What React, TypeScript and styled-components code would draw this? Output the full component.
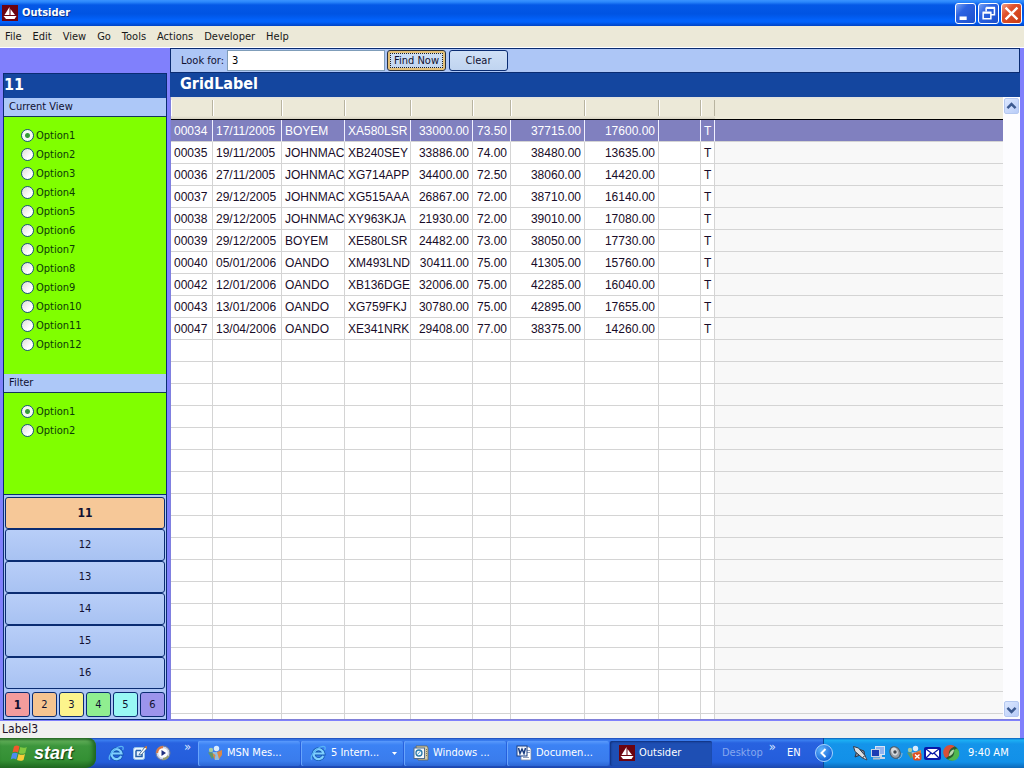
import React, { useState } from "react";
import styled, { createGlobalStyle, css } from "styled-components";

const ui = `"DejaVu Sans Condensed", "Noto Sans", sans-serif`;
const navy = "#0a2c72";
const sky = "#adc6f6";

const Global = createGlobalStyle`
  * { box-sizing: border-box; }
  body { margin: 0; font: 11px/14px ${ui}; color: #101030; }
  button, input { font: inherit; color: inherit; }
`;

const Desktop = styled.div`
  display: flex;
  flex-direction: column;
  height: 100vh;
  overflow: hidden;
  background: #8080fc;
`;

/* ---------- title bar and menu ---------- */
const TitleBar = styled.header`
  display: flex;
  align-items: center;
  gap: 4px;
  height: 26px;
  flex: none;
  padding: 0 2px;
  background: linear-gradient(#3a93ff 0, #2a86fb 2px, #0458e6 5px, #0054e3 14px, #0262fb 20px, #0262fb 22px, #0043c4 26px);
`;
const Title = styled.h1`
  flex: 1;
  margin: 0;
  font-size: 11px;
  line-height: 14px;
  color: #fff;
  text-shadow: 1px 1px #0a318c;
`;
const Caption = styled.button<{ $close?: boolean }>`
  width: 21px;
  height: 21px;
  padding: 0;
  border: 1px solid #fff;
  border-radius: 3px;
  background: ${(p) =>
    p.$close
      ? "linear-gradient(135deg, #f0a088 0, #e0522c 35%, #c83c14 100%)"
      : "linear-gradient(135deg, #7ba4f4 0, #2c63e2 35%, #1c50cc 100%)"};
  svg { display: block; }
`;
const Captions = styled.div`
  display: flex;
  gap: 2px;
`;
const MenuBar = styled.nav`
  display: flex;
  align-items: center;
  gap: 11px;
  height: 22px;
  flex: none;
  padding: 0 5px;
  background: #ece9d8;
  border-bottom: 1px solid #fff;
`;
const MenuLink = styled.a`
  color: #181818;
  text-decoration: none;
`;

/* ---------- main split ---------- */
const Main = styled.main`
  display: flex;
  flex: 1;
  min-height: 0;
  gap: 3px;
  padding: 0 4px 1px 3px;
`;
const Side = styled.aside`
  display: flex;
  flex-direction: column;
  width: 164px;
  flex: none;
  margin-top: 25px;
  border: 1px solid ${navy};
  background: ${sky};
`;
const SideTitle = styled.h2`
  margin: 0;
  height: 24px;
  flex: none;
  background: #14469f;
  color: #fff;
  font-size: 16px;
  line-height: 22px;
`;
const Section = styled.fieldset<{ $grow?: boolean }>`
  display: flex;
  flex-direction: column;
  min-height: 0;
  min-width: 0;
  margin: 0;
  padding: 0;
  border: 0;
  ${(p) => (p.$grow ? css`flex: 1;` : css`flex: none; height: 120px;`)}
`;
const SectionHead = styled.div`
  height: 19px;
  flex: none;
  padding: 2px 5px;
  border-bottom: 1px solid #14365c;
  background: #adc8f8;
`;
const Options = styled.div`
  flex: 1;
  min-height: 0;
  overflow: hidden;
  padding: 9px 17px;
  background: #80ff00;
`;
const Option = styled.label`
  display: flex;
  align-items: center;
  gap: 2px;
  height: 19px;
  color: #0c3a08;
`;
const Radio = styled.input`
  appearance: none;
  width: 13px;
  height: 13px;
  margin: 0;
  border: 1px solid #1c5180;
  border-radius: 50%;
  background: linear-gradient(135deg, #dcdcd7, #fff 70%);
  &:checked {
    background: radial-gradient(circle, #3c8848 0, #35a535 2px, #f6f8f4 3px);
  }
`;
const NavStack = styled.div`
  display: flex;
  flex-direction: column;
  flex: none;
  padding: 2px 1px;
  border-top: 1px solid ${navy};
`;
const NavButton = styled.button<{ $active?: boolean }>`
  height: 32px;
  padding: 0;
  border: 1px solid ${navy};
  border-radius: 3px;
  background: ${(p) => (p.$active ? "#f6c898" : "linear-gradient(#b8cef8, #a8c2f2)")};
  font-weight: ${(p) => (p.$active ? 700 : 400)};
  font-size: ${(p) => (p.$active ? 12 : 11)}px;
`;
const Swatches = styled.div`
  display: flex;
  gap: 2px;
  padding-top: 3px;
`;
const Swatch = styled.button<{ $tint: string; $active?: boolean }>`
  flex: 1;
  height: 25px;
  padding: 0;
  border: 1px solid ${navy};
  border-radius: 3px;
  background: ${(p) => p.$tint};
  font-weight: ${(p) => (p.$active ? 700 : 400)};
  font-size: ${(p) => (p.$active ? 12 : 11)}px;
`;

/* ---------- content ---------- */
const Content = styled.section`
  display: flex;
  flex-direction: column;
  flex: 1;
  min-width: 0;
`;
const SearchBar = styled.form`
  display: flex;
  align-items: center;
  height: 25px;
  flex: none;
  padding: 0 10px;
  border: 1px solid ${navy};
  background: ${sky};
`;
const SearchInput = styled.input`
  width: 158px;
  height: 21px;
  margin: 0 2px 0 3px;
  padding: 0 4px;
  border: 1px solid #7f9db9;
  background: #fff;
  color: #000;
  outline: none;
`;
const PushButton = styled.button<{ $focused?: boolean }>`
  width: 59px;
  height: 21px;
  margin-right: 3px;
  padding: 0;
  border: 1px solid ${navy};
  border-radius: 3px;
  background: linear-gradient(#cfe0f6, #c0d4f0);
  ${(p) =>
    p.$focused &&
    css`
      border-color: #28303c;
      box-shadow: inset 0 0 0 2px #e4c078;
      outline: 1px dotted #222;
      outline-offset: -4px;
    `}
`;
const GridTitle = styled.h2`
  margin: 0;
  height: 24px;
  flex: none;
  padding: 0 10px;
  background: #14469f;
  color: #fff;
  font-size: 16px;
  line-height: 21px;
`;
const GridArea = styled.div`
  display: flex;
  flex: 1;
  min-height: 0;
  border-left: 1px solid #8080e0;
  border-bottom: 1px solid #8080d8;
  background: #fff;
`;
const GridScroll = styled.div`
  flex: 1;
  min-width: 0;
  overflow: hidden;
`;
const Grid = styled.table`
  width: 100%;
  table-layout: fixed;
  border-collapse: separate;
  border-spacing: 0;
  font: 12px/19px "Liberation Sans", Arial, sans-serif;
  color: #180c28;
`;
const HeadCell = styled.th`
  height: 23px;
  padding: 0;
  border-bottom: 1px solid #000;
  background: linear-gradient(90deg, #fff, #fff) left 3px / 1px 16px no-repeat,
    linear-gradient(90deg, #b8b4a0, #b8b4a0) right 3px / 1px 16px no-repeat,
    linear-gradient(#e2e2e0 0, #ece9d8 3px, #ece9d8 19px, #d6d2c2 22px);
  &:last-child {
    background: linear-gradient(#e2e2e0 0, #ece9d8 3px);
  }
`;
const Cell = styled.td<{ $right?: boolean }>`
  height: 22px;
  padding: 2px 3px 0;
  border-right: 1px solid #d4d4d4;
  border-bottom: 1px solid #d4d4d4;
  overflow: hidden;
  white-space: nowrap;
  text-align: ${(p) => (p.$right ? "right" : "left")};
  &:last-child {
    border-right: 0;
    background: #f8f8f8;
  }
`;
const Row = styled.tr<{ $selected?: boolean }>`
  ${(p) =>
    p.$selected &&
    css`
      color: #fff;
      ${Cell}, ${Cell}:last-child {
        background: #8080bf;
        border-right-color: #f0f0ff;
      }
    `}
`;
const ScrollTrack = styled.div`
  display: flex;
  flex-direction: column;
  justify-content: space-between;
  width: 17px;
  flex: none;
  padding: 1px 1px 2px;
  background: #fdfdff;
`;
const ScrollButton = styled.button`
  width: 15px;
  height: 16px;
  padding: 0;
  border: 1px solid #b4c8f0;
  border-radius: 2px;
  background: linear-gradient(135deg, #dce8ff, #b8ccf8);
  svg { display: block; }
`;

const Status = styled.footer`
  height: 17px;
  flex: none;
  margin: 0 4px 0 0;
  padding: 1px 2px;
  background: #f0f0f0;
  color: #201028;
  font-size: 12px;
`;

/* ---------- taskbar ---------- */
const Taskbar = styled.footer`
  display: flex;
  align-items: center;
  height: 30px;
  flex: none;
  color: #fff;
  background: linear-gradient(#1c48b4 0, #3c80f0 2px, #2862e0 5px, #245ddb 24px, #1c46ac 30px);
`;
const Start = styled.button`
  display: flex;
  align-items: center;
  gap: 5px;
  width: 96px;
  height: 30px;
  padding: 0 10px;
  border: 0;
  border-radius: 0 8px 10px 0;
  background: linear-gradient(#2c6c2c 0, #5eac56 3px, #3c963c 8px, #349034 22px, #226c22 30px);
  box-shadow: inset -3px 0 4px #1e6420;
  color: #fff;
  font: italic 700 18px/20px "Liberation Sans", Arial, sans-serif;
  text-shadow: 1px 1px 1px #123c12;
`;
const QuickLaunch = styled.div`
  display: flex;
  align-items: center;
  gap: 7px;
  width: 102px;
  height: 30px;
  padding-left: 12px;
  svg { flex: none; }
`;
const Chevron = styled.span`
  align-self: flex-start;
  margin-left: 6px;
  padding-top: 2px;
  font-size: 13px;
  line-height: 14px;
  color: #d8e6ff;
`;
const Tasks = styled.div`
  display: flex;
  flex: 1;
  min-width: 0;
  gap: 1px;
`;
const Task = styled.button<{ $active?: boolean }>`
  display: flex;
  align-items: center;
  gap: 4px;
  width: 102px;
  height: 25px;
  padding: 0 6px 0 9px;
  border: 0;
  border-radius: 2px;
  white-space: nowrap;
  background: ${(p) =>
    p.$active ? "#1e4fb4" : "linear-gradient(#5a9afc 0, #3c82f4 4px, #3a7cec 20px, #2c66d4 25px)"};
  box-shadow: ${(p) => (p.$active ? "inset 1px 1px 2px #10307c" : "inset 1px 0 #68a4fc")};
  svg { flex: none; }
`;
const TaskText = styled.span`
  flex: 1;
  text-align: left;
`;
const Language = styled.div`
  display: flex;
  align-items: center;
  width: 110px;
  height: 30px;
  padding: 0 0 0 9px;
`;
const Faded = styled.span`
  color: #86a8ee;
`;
const LangCode = styled.span`
  margin-left: 11px;
`;
const Tray = styled.div`
  display: flex;
  align-items: center;
  gap: 2px;
  width: 201px;
  height: 30px;
  background: linear-gradient(#0c5cb8 0, #1cb0f4 2px, #1494ea 6px, #1290e8 24px, #0c68b8 30px);
  border-left: 1px solid #0c4898;
  svg { flex: none; }
`;
const TrayToggle = styled.button`
  width: 18px;
  height: 18px;
  margin: 0 17px 0 -9px;
  padding: 0;
  border: 1px solid #a8d4ff;
  border-radius: 50%;
  background: radial-gradient(circle at 35% 30%, #60b4fc, #1464d8 75%);
  svg { display: block; }
`;
const Clock = styled.time`
  margin-left: 6px;
  white-space: nowrap;
`;

/* ---------- icons ---------- */
const Boat = () => (
  <svg width="16" height="16" viewBox="0 0 16 16" aria-hidden="true">
    <rect width="16" height="16" fill="#6c0410" />
    <path d="M7.500 2v8H2.500zM8.500 4l4.500 6H8.500zM1.500 11h13l-2 3H4z" fill="#fff" />
  </svg>
);
const Explorer = () => (
  <svg width="17" height="16" viewBox="0 0 17 16" aria-hidden="true">
    <path d="M13.200 11A5 5 0 1 1 13.500 8.500H4.500" fill="none" stroke="#1458b0" strokeWidth="3.800" />
    <path d="M13.200 11A5 5 0 1 1 13.500 8.500H4.500" fill="none" stroke="#80d0ff" strokeWidth="2.200" />
    <path d="M2 14.800C-.5 13 4 4.500 10.500 2c4-1.500 5.500 0 4.200 3" fill="none" stroke="#58b4f4" strokeWidth="1.300" />
  </svg>
);
const ShowDesktop = () => (
  <svg width="16" height="16" viewBox="0 0 16 16" aria-hidden="true">
    <rect x="1.500" y="2.500" width="11" height="12" rx="2" fill="#e8f4ff" stroke="#98c4e8" />
    <path d="M4 5.500h5M4 5.500v6h6V9" fill="none" stroke="#2460a8" strokeWidth="1.500" />
    <path d="M7 9.500 13 2l2 1.500L9 10z" fill="#fff" stroke="#285888" strokeWidth=".8" />
    <path d="m12 2 3-1v3z" fill="#d07838" />
  </svg>
);
const MediaPlayer = () => (
  <svg width="16" height="16" viewBox="0 0 16 16" aria-hidden="true">
    <circle cx="8" cy="8" r="7" fill="#c8d4ec" stroke="#707890" />
    <path d="M8 1a7 7 0 0 0-7 7h3a4 4 0 0 1 4-4z" fill="#d87848" />
    <path d="M8 15a7 7 0 0 0 6-4l-3-1a4 4 0 0 1-3 2z" fill="#98a070" />
    <circle cx="8" cy="8" r="4.800" fill="#fff" />
    <path d="m6.500 5 4.500 3-4.500 3z" fill="#203080" />
  </svg>
);
const WindowsFlag = () => (
  <svg width="19" height="18" viewBox="0 0 19 18" aria-hidden="true">
    <path d="M4 2.500c2-1.500 4-1 5.500 0L8 8.500c-2-1-3.500-1.300-5.500 0z" fill="#f0582c" />
    <path d="M10.300 3c2 1 4 1.200 6.500 0l-1.500 6c-2 1.300-4.500 1-6.500 0z" fill="#80c840" />
    <path d="M2.200 9.500c2-1.300 3.800-1 5.500 0l-1.500 6c-2-1.200-3.700-1.200-5.500 0z" fill="#4c8cf0" />
    <path d="M8.500 10c2 1 4.300 1.300 6.500 0l-1.500 6c-2.300 1.200-4.500 1-6.500 0z" fill="#f8cc38" />
  </svg>
);
const Messenger = ({ offline }: { offline?: boolean }) => (
  <svg width="16" height="16" viewBox="0 0 16 16" aria-hidden="true">
    <circle cx="4" cy="5" r="2.200" fill="#a8cca0" />
    <path d="M1 7.500h6v4L5 14z" fill="#609868" />
    <circle cx="9.500" cy="3.500" r="2.700" fill="#d8ecff" />
    <path d="M5.500 7h8l-1.500 8H8z" fill="#90bce0" />
    <path d="m10 7 5-2v5l-3 4zM5.500 8l3 2-1 5z" fill="#d88848" />
    {offline && (
      <>
        <rect x="7" y="7.500" width="8.500" height="8" rx="2" fill="#e04c20" />
        <path d="m9 9.500 4.500 4m0-4-4.500 4" stroke="#fff" strokeWidth="1.400" />
      </>
    )}
  </svg>
);
const WindowsDoc = () => (
  <svg width="16" height="16" viewBox="0 0 16 16" aria-hidden="true">
    <path d="M3 1h11l1 2v12H5z" fill="#d4cca8" stroke="#686450" strokeWidth=".8" />
    <rect x="1" y="3" width="10.500" height="10.500" fill="#f4f8fc" stroke="#506c8c" />
    <circle cx="6" cy="8" r="3" fill="none" stroke="#2878a8" strokeWidth="1.300" />
    <path d="m4.500 9.500 3.500-4" stroke="#48a0d0" />
    <path d="M13.500 4v8" stroke="#807858" strokeDasharray="1 1" />
  </svg>
);
const WordDoc = () => (
  <svg width="16" height="16" viewBox="0 0 16 16" aria-hidden="true">
    <path d="M5 2h8l2 2v11H5z" fill="#fff" stroke="#7888a8" strokeWidth=".8" />
    <path d="M11 5.500h3M11 7.500h3M7 12.500h6" stroke="#90a0c0" />
    <rect x="1" y="1" width="10" height="10" fill="#f4f8ff" stroke="#183c80" />
    <path d="m2.500 3 1.500 5.500L6 4l2 4.500L9.500 3" fill="none" stroke="#183c80" strokeWidth="1.500" />
  </svg>
);
const Rocket = () => (
  <svg width="16" height="16" viewBox="0 0 16 16" aria-hidden="true">
    <path d="m4.500 7-1.500 5 4-1.500M8 4.500l4 1.500 .5 4" fill="#8890a0" stroke="#303848" />
    <path d="M1.500 1.500 6.500 3 13 10.500 10.500 13 3 6.500z" fill="#dce0e4" stroke="#303848" />
    <path d="m10.500 13 2.500-2.500 2 4.500z" fill="#e8e8e8" stroke="#404858" />
  </svg>
);
const Network = () => (
  <svg width="16" height="16" viewBox="0 0 16 16" aria-hidden="true">
    <rect x="5.500" y="1.500" width="9" height="8" fill="#90b4f0" stroke="#d8e4f4" />
    <path d="M11 10v3h4" stroke="#c8d4e4" strokeWidth="2" fill="none" />
    <rect x="1.500" y="4.500" width="8" height="7" fill="#1c3cb4" stroke="#c8d4e4" />
    <path d="M3 13.500h7" stroke="#b0bccc" strokeWidth="2" />
  </svg>
);
const Speaker = () => (
  <svg width="16" height="16" viewBox="0 0 16 16" aria-hidden="true">
    <ellipse cx="7" cy="7.500" rx="5" ry="6" fill="#98a0a8" stroke="#505860" transform="rotate(-25 7 7.500)" />
    <ellipse cx="6.500" cy="6.500" rx="3" ry="4" fill="#d8dce0" transform="rotate(-25 6.500 6.500)" />
    <circle cx="7" cy="7" r="1.700" fill="#404850" />
    <path d="M14 8c0 3-1 5-4 6" fill="none" stroke="#90b8d8" />
  </svg>
);
const Mail = () => (
  <svg width="17" height="16" viewBox="0 0 17 16" aria-hidden="true">
    <rect x="0" y="2" width="17" height="13" rx="2" fill="#0818a8" />
    <rect x="2" y="4" width="13" height="9" fill="#fff" />
    <path d="m2 4 6.500 5L15 4M2 13l5-5M15 13l-5-5" fill="none" stroke="#0818a8" strokeWidth="1.300" />
  </svg>
);
const Swirl = () => (
  <svg width="17" height="16" viewBox="0 0 17 16" aria-hidden="true">
    <circle cx="8.500" cy="8" r="7.500" fill="#285c30" />
    <path d="M3 13A7 7 0 0 1 12 1.500C7 3 5 7 6 11z" fill="#d85038" />
    <path d="M14 3.500a7 7 0 0 1-9.500 10.500C10 13 12 9 11 5z" fill="#50b850" />
    <path d="M6 11c0-3 2-6 5-6.500 0 3-2 6-5 6.500z" fill="#b8d8b0" />
  </svg>
);
const Glyph = ({ size, d, color = "#fff", width = 2 }: { size: number; d: string; color?: string; width?: number }) => (
  <svg width={size} height={size} viewBox="0 0 16 16" aria-hidden="true">
    <path d={d} fill="none" stroke={color} strokeWidth={width} />
  </svg>
);

/* ---------- data ---------- */
const menus = ["File", "Edit", "View", "Go", "Tools", "Actions", "Developer", "Help"];
const views = Array.from({ length: 12 }, (_, i) => `Option${i + 1}`);
const filters = ["Option1", "Option2"];
const navs = ["11", "12", "13", "14", "15", "16"];
const tints = ["#f49c9c", "#f6c490", "#fcf48c", "#90ee90", "#98f8f4", "#9c94ec"];
const widths = [42, 69, 63, 66, 62, 38, 74, 74, 42, 14];
const rows = [
  ["00034", "17/11/2005", "BOYEM", "XA580LSR", "33000.00", "73.50", "37715.00", "17600.00"],
  ["00035", "19/11/2005", "JOHNMAC", "XB240SEY", "33886.00", "74.00", "38480.00", "13635.00"],
  ["00036", "27/11/2005", "JOHNMAC", "XG714APP", "34400.00", "72.50", "38060.00", "14420.00"],
  ["00037", "29/12/2005", "JOHNMAC", "XG515AAA", "26867.00", "72.00", "38710.00", "16140.00"],
  ["00038", "29/12/2005", "JOHNMAC", "XY963KJA", "21930.00", "72.00", "39010.00", "17080.00"],
  ["00039", "29/12/2005", "BOYEM", "XE580LSR", "24482.00", "73.00", "38050.00", "17730.00"],
  ["00040", "05/01/2006", "OANDO", "XM493LND", "30411.00", "75.00", "41305.00", "15760.00"],
  ["00042", "12/01/2006", "OANDO", "XB136DGE", "32006.00", "75.00", "42285.00", "16040.00"],
  ["00043", "13/01/2006", "OANDO", "XG759FKJ", "30780.00", "75.00", "42895.00", "17655.00"],
  ["00047", "13/04/2006", "OANDO", "XE341NRK", "29408.00", "77.00", "38375.00", "14260.00"],
].map((r) => [...r, "", "T", ""]);
const blank = Array.from({ length: 18 }, () => Array<string>(11).fill(""));

const RadioSection = ({ title, name, options, grow }: { title: string; name: string; options: string[]; grow?: boolean }) => (
  <Section $grow={grow} aria-label={title}>
    <SectionHead>{title}</SectionHead>
    <Options>
      {options.map((o, i) => (
        <Option key={o}>
          <Radio type="radio" name={name} defaultChecked={i === 0} />
          {o}
        </Option>
      ))}
    </Options>
  </Section>
);

export default function App() {
  const [query, setQuery] = useState("3");
  return (
    <Desktop>
      <Global />
      <TitleBar>
        <Boat />
        <Title>Outsider</Title>
        <Captions>
          <Caption aria-label="Minimize"><Glyph size={19} d="M3 12h6" width={3} /></Caption>
          <Caption aria-label="Restore"><Glyph size={19} d="M6 6V3.500h7V9h-2.500M3.500 7.500h6.500v5H3.500zM3 7h7.500M6 3h7.500" width={1.3} /></Caption>
          <Caption $close aria-label="Close"><Glyph size={19} d="m3 3 10 10M13 3 3 13" /></Caption>
        </Captions>
      </TitleBar>
      <MenuBar>
        {menus.map((m) => <MenuLink key={m} href="#">{m}</MenuLink>)}
      </MenuBar>
      <Main>
        <Side>
          <SideTitle>11</SideTitle>
          <RadioSection title="Current View" name="view" options={views} grow />
          <RadioSection title="Filter" name="filter" options={filters} />
          <NavStack>
            {navs.map((n, i) => <NavButton key={n} $active={i === 0}>{n}</NavButton>)}
            <Swatches>
              {tints.map((t, i) => <Swatch key={t} $tint={t} $active={i === 0}>{i + 1}</Swatch>)}
            </Swatches>
          </NavStack>
        </Side>
        <Content>
          <SearchBar onSubmit={(e) => e.preventDefault()}>
            <label htmlFor="look">Look for:</label>
            <SearchInput id="look" value={query} onChange={(e) => setQuery(e.target.value)} />
            <PushButton type="submit" $focused>Find Now</PushButton>
            <PushButton type="button" onClick={() => setQuery("")}>Clear</PushButton>
          </SearchBar>
          <GridTitle>GridLabel</GridTitle>
          <GridArea>
            <GridScroll>
              <Grid>
                <colgroup>
                  {widths.map((w, i) => <col key={i} width={w} />)}
                  <col />
                </colgroup>
                <thead>
                  <tr>{[...widths, 0].map((_, i) => <HeadCell key={i} />)}</tr>
                </thead>
                <tbody>
                  {[...rows, ...blank].map((r, y) => (
                    <Row key={y} $selected={y === 0}>
                      {r.map((v, x) => <Cell key={x} $right={x > 3 && x < 8}>{v}</Cell>)}
                    </Row>
                  ))}
                </tbody>
              </Grid>
            </GridScroll>
            <ScrollTrack>
              <ScrollButton aria-label="Scroll up"><Glyph size={13} d="m3 10 5-5 5 5" color="#3c5a90" width={3} /></ScrollButton>
              <ScrollButton aria-label="Scroll down"><Glyph size={13} d="m3 6 5 5 5-5" color="#3c5a90" width={3} /></ScrollButton>
            </ScrollTrack>
          </GridArea>
        </Content>
      </Main>
      <Status>Label3</Status>
      <Taskbar>
        <Start><WindowsFlag />start</Start>
        <QuickLaunch>
          <Explorer /><ShowDesktop /><MediaPlayer /><Chevron>»</Chevron>
        </QuickLaunch>
        <Tasks>
          <Task><Messenger /><TaskText>MSN Mes...</TaskText></Task>
          <Task>
            <Explorer /><TaskText>5 Intern...</TaskText>
            <svg width="5" height="3" aria-hidden="true"><path d="M0 0h5L2.500 3z" fill="#fff" /></svg>
          </Task>
          <Task><WindowsDoc /><TaskText>Windows ...</TaskText></Task>
          <Task><WordDoc /><TaskText>Documen...</TaskText></Task>
          <Task $active><Boat /><TaskText>Outsider</TaskText></Task>
        </Tasks>
        <Language>
          <Faded>Desktop</Faded><Chevron>»</Chevron><LangCode>EN</LangCode>
        </Language>
        <Tray>
          <TrayToggle aria-label="Show hidden icons"><Glyph size={16} d="M9.500 4 5.500 8l4 4" /></TrayToggle>
          <Rocket /><Network /><Speaker /><Messenger offline /><Mail /><Swirl />
          <Clock>9:40 AM</Clock>
        </Tray>
      </Taskbar>
    </Desktop>
  );
}
